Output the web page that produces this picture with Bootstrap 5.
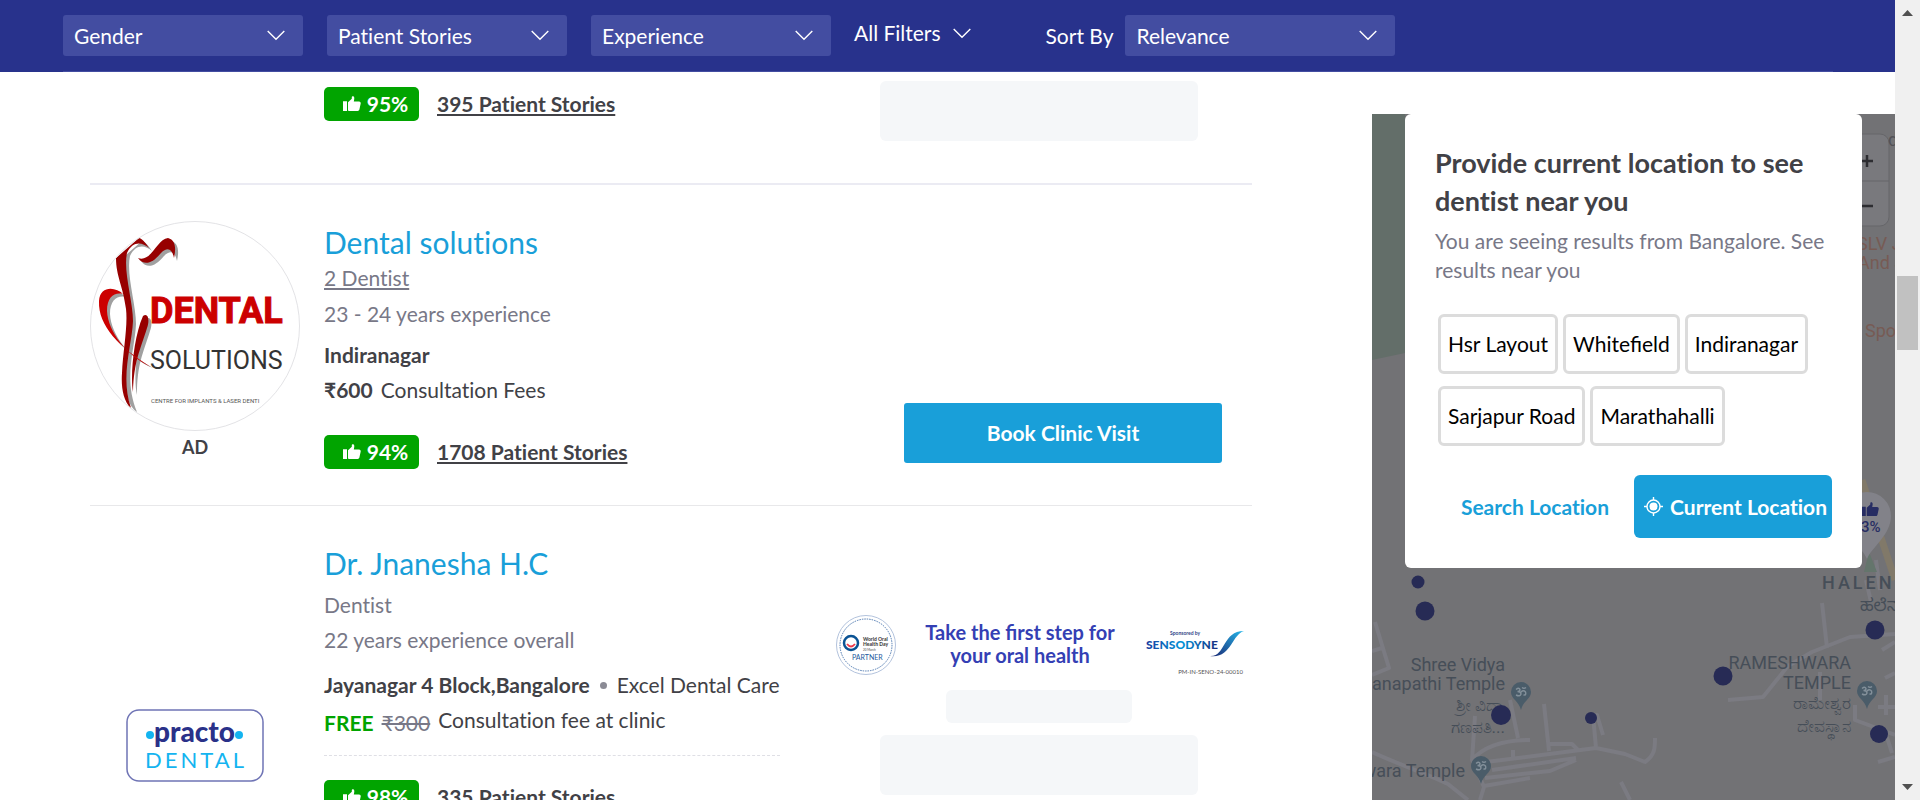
<!DOCTYPE html>
<html lang="en">
<head>
<meta charset="utf-8">
<meta name="viewport" content="width=device-width, initial-scale=1">
<title>Dentists in Bangalore</title>
<link href="https://cdn.jsdelivr.net/npm/bootstrap@5.3.0/dist/css/bootstrap.min.css" rel="stylesheet">
<style>
body{font-family:Lato,"Liberation Sans",sans-serif;font-size:21px;line-height:30px;color:#414146;height:100vh;overflow:hidden;font-variant-ligatures:no-common-ligatures}
button,select{font-variant-ligatures:inherit}
.page-shell,.page-main,.page-body{min-height:0;overflow:hidden}
.with-ligatures{font-variant-ligatures:normal}
.filter-bar{background:#28328c;height:72px;padding-left:63px;padding-right:62px}
.filter-inner{border-bottom:1px solid #434da1;padding-top:15px;height:72px}
.filter-select{appearance:none;width:240px;height:41px;border:0;border-radius:3px;color:#fff;padding:0 11px;line-height:41px;background:#434da1 url("data:image/svg+xml,%3Csvg xmlns='http://www.w3.org/2000/svg' width='18' height='11'%3E%3Cpath d='M.7 1 9 9.3 17.300 1' fill='none' stroke='%23fff' stroke-width='1.4'/%3E%3C/svg%3E") no-repeat right 18px center}
.sort-select{width:270px}
.filter-plain{color:#fff;background:none;border:0;padding:0;height:36px;gap:12px;margin:0 75px 0 23px}
.sort-label{color:#fff;height:41px;line-height:41px;margin-right:12px}
.results{padding:0 120px 0 90px}
.result{border-bottom:1px solid #e8e8ea;padding:36px 0}
.result-first{border-bottom:2px solid #ebebf3;padding:9px 0 42px}
.result-first .info-col{padding-top:6px}
.result-last{border:0}
.photo-col{width:210px;margin-right:24px}
.info-col{min-width:456px;white-space:nowrap}
.action-col{width:426px}
.doc-name{font-size:30px;line-height:42px;font-weight:400}
.doc-name a{color:#199fd9;text-decoration:none}
.muted-text,.muted-text a{color:#787887}
.rating{background:#01a400;color:#fff;border-radius:5px;height:34px;width:95px;font-weight:700;padding-left:8px;gap:6px}
.stories{color:#414146;font-weight:700;margin-left:18px;line-height:33px}
.skeleton{background:#f5f7f9;border-radius:6px;height:60px;width:318px}
.skeleton-short{width:186px;height:33px;margin:14px 0 12px}
.book-btn{background:#199fd9;color:#fff;border:0;border-radius:3px;width:318px;height:60px;font-weight:700;margin:0 30px 6px 0}
.ad-label{font-size:18px;line-height:24px;font-weight:700}
.dash-line{border-top:1px dashed #dfdfe5;margin-top:17px;max-width:456px}
.free-row{margin-top:5px}
.free-row .lowered{padding-top:3px}
.free-text{color:#01a400;font-weight:700}
.dot-mark{width:7px;height:7px;border-radius:50%;background:#8b8b95;margin:0 10px}
.banner-text{color:#343fb4;font-weight:700;font-size:20px;line-height:23px;padding-top:7px}
.map-col{width:523px;padding:42px 0 0}
.map-box{background:#727275;overflow:hidden;padding:0 33px}
.map-art{left:0;top:0}
.loc-card{background:#fff;border-radius:6px;padding:30px}
.loc-title{font-size:27px;line-height:38px;font-weight:700}
.loc-text{line-height:29px;color:#787887;margin-top:6px}
.chips{gap:12px 5px;padding:30px 3px 0}
.chip{background:#fff;border:3px solid #dcdcdc;border-radius:6px;height:60px;padding:0 7px;color:#000}
.loc-actions{padding-top:29px}
.search-loc{background:none;border:0;color:#199fd9;font-weight:700;margin-right:19px}
.current-loc{background:#199fd9;border:0;color:#fff;font-weight:700;height:63px;width:198px;border-radius:6px;white-space:nowrap;padding:0 5px 0 10px}
.scroll-track{width:25px;background:#f0f0f0}
.scroll-thumb{background:#c1c1c1;height:74px;width:21px;margin-top:260px}
</style>
</head>
<body>
<svg class="d-none" xmlns="http://www.w3.org/2000/svg">
  <symbol id="thumb" viewBox="0 0 18 16"><path d="M0 5.200h4V15H0zM5 14.300V6.200L8.800 2.700V1.200C8.800.2 10 0 10.700.5c.9.800.7 2.500.1 4.900h5.200c1.300 0 1.900 1 1.700 2.200l-1.300 6c-.2.900-.8 1.400-1.700 1.400H6.500c-.9 0-1.500-.2-1.500-.7z" fill="currentColor"/></symbol>
  <symbol id="om-pin" viewBox="0 0 20 28"><path d="M10 0a10 10 0 0 1 10 10c0 7-8 9-10 18C8 19 0 17 0 10A10 10 0 0 1 10 0z" fill="#4a5c69"/><path d="M5 7.500q3-2.500 4 0 0 2-2.500 2 3.500 0 3.500 2.500-1 3-5 1M10 10q2.500-2.500 4.500 0 1 3.500-2 3M11 5.500q2 1.500 4 0" fill="none" stroke="#83909a" stroke-width="1.400"/></symbol>
</svg>
<div class="page-shell d-flex h-100">
  <div class="page-main flex-grow-1 d-flex flex-column">
    <header class="filter-bar flex-shrink-0">
      <div class="filter-inner d-flex">
        <select class="filter-select me-4" aria-label="Gender"><option>Gender</option></select>
        <select class="filter-select me-4" aria-label="Patient Stories"><option>Patient Stories</option></select>
        <select class="filter-select" aria-label="Experience"><option>Experience</option></select>
        <button class="filter-plain d-flex align-items-center">All Filters<svg width="18" height="11" viewBox="0 0 18 11"><path d="M.7 1 9 9.300 17.300 1" fill="none" stroke="#fff" stroke-width="1.400"/></svg></button>
        <label class="sort-label" for="sort">Sort By</label>
        <select id="sort" class="filter-select sort-select"><option>Relevance</option></select>
      </div>
    </header>
    <div class="page-body flex-grow-1 d-flex">
      <main class="results flex-grow-1">
        <article class="result result-first d-flex">
          <div class="photo-col flex-shrink-0"></div>
          <div class="info-col flex-grow-1 d-flex align-items-start">
            <div class="rating d-flex align-items-center justify-content-center"><svg width="18" height="16"><use href="#thumb"/></svg>95%</div>
            <a class="stories" href="#">395 Patient Stories</a>
          </div>
          <div class="action-col d-flex justify-content-center"><div class="skeleton"></div></div>
        </article>
        <article class="result d-flex">
          <div class="photo-col flex-shrink-0 text-center">
            <svg class="d-block" width="210" height="210" viewBox="0 0 210 210" role="img" aria-label="Dental Solutions">
              <defs><clipPath id="round"><circle cx="105" cy="105" r="104.500"/></clipPath></defs>
              <g clip-path="url(#round)">
                <g fill="#a0a0a0" transform="translate(3 3)">
                  <path d="M26 37 49 17C53 18 57 24 59 27 51 20 42 21 37 32 33 50 43 80 43 100 42 125 30 155 44 188 35 183 31 165 32 152 33 130 38 105 36 88 33 65 26 55 26 37zM48 37C61 42 67 18 78 17 86 19 86 28 84 37 82 27 77 26 71 32 62 43 54 45 48 37zM33 73C26 66 10 64 9 80 8 105 29 126 60 144 37 135 18 111 17 90 17 75 25 71 33 73zM53 95C58 91 60 99 57 107 50 130 44 140 44 171 40 155 44 115 53 95z"/>
                </g>
                <path fill="#970000" d="M26 37 49 17C53 18 57 24 59 27 51 20 42 21 37 32 33 50 43 80 43 100 42 125 30 155 41 187 33 180 31 165 32 152 33 130 38 105 36 88 33 65 26 55 26 37zM48 37C61 42 67 18 78 17 86 19 86 28 84 37 82 27 77 26 71 32 62 43 54 45 48 37zM53 95C58 91 60 99 57 107 50 130 44 140 43 171 40 155 44 115 53 95z"/>
                <path fill="#c00" d="M33 73C26 66 10 64 9 80 8 105 29 126 61 146 37 135 18 111 17 90 17 75 25 71 33 73z"/>
              </g>
              <g font-family="Roboto,'Liberation Sans',sans-serif">
                <text x="60" y="102" font-weight="700" font-size="36" fill="#c00" stroke="#c00">DENTAL</text>
                <text x="60" y="148" font-size="25" fill="#333">SOLUTIONS</text>
                <text x="61" y="182" font-size="6" fill="#555">CENTRE FOR IMPLANTS &amp; LASER DENTI</text>
              </g>
              <circle cx="105" cy="105" r="104.500" fill="none" stroke="#e3e3e6"/>
            </svg>
            <div class="ad-label mt-1">AD</div>
          </div>
          <div class="info-col flex-grow-1">
            <h2 class="doc-name mb-0"><a href="#">Dental solutions</a></h2>
            <div class="muted-text"><a href="#">2 Dentist</a></div>
            <div class="muted-text" style="margin-top:6px">23 - 24 years experience</div>
            <div class="fw-bold" style="margin-top:11px">Indiranagar</div>
            <div style="margin-top:5px"><b class="me-2">₹600</b>Consultation Fees</div>
            <div class="d-flex" style="margin-top:30px">
              <div class="rating d-flex align-items-center justify-content-center"><svg width="18" height="16"><use href="#thumb"/></svg>94%</div>
              <a class="stories" href="#">1708 Patient Stories</a>
            </div>
          </div>
          <div class="action-col d-flex align-items-end justify-content-end"><button class="book-btn">Book Clinic Visit</button></div>
        </article>
        <article class="result result-last d-flex">
          <div class="photo-col flex-shrink-0">
            <svg class="d-block mx-auto" style="margin-top:167px" width="138" height="73" viewBox="0 0 138 73" role="img" aria-label="Practo Dental">
              <rect x="1" y="1" width="136" height="71" rx="12" fill="#fff" stroke="#6f74b5" stroke-width="1.500"/>
              <circle cx="24" cy="26" r="4" fill="#14b4f0"/><circle cx="113" cy="26" r="4" fill="#14b4f0"/>
              <text x="68.500" y="33" text-anchor="middle" font-family="Lato" font-weight="900" font-size="28" fill="#2a3189">practo</text>
              <text x="70" y="59" text-anchor="middle" font-family="Lato" font-size="22" letter-spacing="3" fill="#14b4f0">DENTAL</text>
            </svg>
          </div>
          <div class="info-col flex-grow-1">
            <h2 class="doc-name mb-0"><a href="#">Dr. Jnanesha H.C</a></h2>
            <div class="muted-text" style="margin-top:6px">Dentist</div>
            <div class="muted-text" style="margin-top:5px">22 years experience overall</div>
            <div class="d-flex align-items-center" style="margin-top:15px"><b>Jayanagar 4 Block,Bangalore</b><span class="dot-mark"></span>Excel Dental Care</div>
            <div class="free-row d-flex"><span class="free-text lowered me-2">FREE</span><s class="muted-text lowered me-2">₹300</s>Consultation fee at clinic</div>
            <div class="dash-line"></div>
            <div class="d-flex mt-4">
              <div class="rating d-flex align-items-center justify-content-center"><svg width="18" height="16"><use href="#thumb"/></svg>98%</div>
              <a class="stories" href="#">335 Patient Stories</a>
            </div>
          </div>
          <div class="action-col d-flex flex-column align-items-center" style="padding-top:72px">
            <div class="d-flex w-100 justify-content-between px-2">
              <svg width="62" height="62" viewBox="0 0 62 62" role="img" aria-label="World Oral Health Day partner">
                <circle cx="32" cy="31" r="29.500" fill="none" stroke="#b3c3dd"/><circle cx="32" cy="31" r="26" fill="none" stroke="#4d78b0" stroke-dasharray="1.500 1"/>
                <circle cx="17" cy="29" r="7" fill="none" stroke="#0b5394" stroke-width="2.500"/><path d="M13 30q4 5 8 0" fill="none" stroke="#ee3a4b" stroke-width="1.800"/>
                <g font-family="Lato" font-weight="900" font-size="5" fill="#444"><text x="29" y="27">World Oral</text><text x="29" y="32">Health Day</text><text x="29" y="37" font-size="3" font-weight="400">20 March</text></g>
                <text x="18" y="46" font-family="Lato" font-size="7" fill="#1c5a9d">PARTNER</text>
              </svg>
              <div class="banner-text with-ligatures text-center">Take the first step for<br>your oral health</div>
              <svg width="100" height="62" viewBox="0 0 100 62" role="img" aria-label="Sponsored by Sensodyne">
                <defs><linearGradient id="sens"><stop stop-color="#183da0"/><stop offset=".5" stop-color="#0094d9"/><stop offset="1" stop-color="#182b7d"/></linearGradient><linearGradient id="wave" x1="0" y1="1" x2="1" y2="0"><stop stop-color="#1b2672"/><stop offset="1" stop-color="#25b7ea"/></linearGradient></defs>
                <text x="26" y="21" font-family="Lato" font-size="5" font-weight="700" fill="#304488">Sponsored by</text>
                <text x="2" y="35" font-family="Lato" font-size="12" font-weight="900" fill="url(#sens)">SENSODYNE</text>
                <path d="M66 42C82 43 78 17 100 17 88 20 87 45 66 42z" fill="url(#wave)"/>
                <text x="99" y="60" text-anchor="end" font-family="Lato" font-size="6" fill="#555">PM-IN-SENO-24-00010</text>
              </svg>
            </div>
            <div class="skeleton skeleton-short"></div>
            <div class="skeleton"></div>
          </div>
        </article>
      </main>
      <aside class="map-col flex-shrink-0 d-flex flex-column">
        <div class="map-box position-relative flex-grow-1">
          <svg class="map-art position-absolute w-100 h-100" viewBox="1372 114 523 686" preserveAspectRatio="xMinYMin slice" aria-label="Map">
            <path d="M1372 114h33v239l-33 7z" fill="#636e69"/>
            <g fill="none" stroke="#7b7b82" stroke-width="4" stroke-linejoin="round">
              <path d="M1372 651 1382 648M1375 622 1389 668 1372 675M1372 752C1400 765 1430 775 1448 784L1468 800M1728 700 1763 697 1788 666 1812 652 1850 637 1895 634M1822 603 1827 648M1820 672v28M1855 705v15l40 15M1886 695v20M1878 707h17M1885 678l10-5M1882 650l13-8M1884 728l8 25M1878 762 1895 757"/>
              <path d="M1480 800 1484 787 1472 760 1475 716M1472 760C1485 745 1505 740 1530 740M1510 700 1518 738M1544 704 1549 751M1486 762 1596 748 1625 754 1645 762C1655 755 1655 748 1655 738M1596 748 1593 715 1597 715 1603 735M1549 744 1572 744 1578 750M1484 786 1530 778M1485 778 1550 771 1576 760M1492 770 1576 758M1513 760v-10M1621 782 1630 800M1880 590 1876 560M1871 602 1866 580"/>
            </g>
            <path d="M1862 480 1895 580" stroke="#817969" stroke-width="7"/><path d="M1864 572l5-20 8 20z" fill="#64756c"/>
            <g fill="#79797d" stroke="#66666a"><rect x="1835" y="134" width="54" height="92" rx="9"/><path d="M1835 181h54"/></g>
            <path d="M1861 161h12M1867 155v12M1861 206h12" stroke="#2d2d31" stroke-width="2.500"/>
            <path d="M1867 559C1863 548 1843 535 1843 516a24 24 0 0 1 48 0c0 19-20 32-24 43z" fill="#828289"/>
            <svg x="1862" y="501" width="17" height="17" color="#272d63"><use href="#thumb"/></svg>
            <g font-family="Roboto,sans-serif" font-size="18">
              <text x="1861" y="532" font-size="15" font-weight="500" fill="#272d63">3%</text>
              <g fill="#775b54"><text x="1857" y="250">SLV J</text><text x="1858" y="269">And S</text><text x="1865" y="337">Spo</text></g>
              <text x="1888" y="146" fill="#525257">d</text>
              <g fill="#464e58">
                <text x="1822" y="589" font-weight="500" letter-spacing="3">HALEN</text>
                <text x="1860" y="611" font-size="17" font-family="'Noto Sans Kannada',sans-serif">ಹಲೆನ</text>
                <g text-anchor="end"><text x="1505" y="671">Shree Vidya</text><text x="1505" y="690">Ganapathi Temple</text><text x="1505" y="711" font-size="17">ಶ್ರೀ ವಿದ್ಯಾ</text><text x="1505" y="733" font-size="17">ಗಣಪತಿ...</text><text x="1465" y="777">wara Temple</text>
                <text x="1851" y="669">RAMESHWARA</text><text x="1851" y="689">TEMPLE</text><text x="1851" y="709" font-size="17">ರಾಮೇಶ್ವರ</text><text x="1851" y="732" font-size="17">ದೇವಸ್ಥಾನ</text></g>
              </g>
            </g>
            <use href="#om-pin" x="1511" y="682" width="20" height="28"/><use href="#om-pin" x="1471" y="756" width="20" height="28"/><use href="#om-pin" x="1857" y="681" width="20" height="28"/>
            <g fill="#272b55"><circle cx="1418" cy="582" r="6.500"/><circle cx="1425" cy="611" r="9.500"/><circle cx="1501" cy="715" r="10"/><circle cx="1591" cy="718" r="6"/><circle cx="1723" cy="676" r="9.500"/><circle cx="1875" cy="630" r="9.500"/><circle cx="1879" cy="734" r="9"/></g>
          </svg>
          <section class="loc-card position-relative">
            <h1 class="loc-title mb-0">Provide current location to see dentist near you</h1>
            <p class="loc-text mb-0">You are seeing results from Bangalore. See results near you</p>
            <div class="chips with-ligatures d-flex flex-wrap">
              <button class="chip">Hsr Layout</button><button class="chip">Whitefield</button><button class="chip">Indiranagar</button><button class="chip">Sarjapur Road</button><button class="chip">Marathahalli</button>
            </div>
            <div class="loc-actions d-flex justify-content-end align-items-center">
              <button class="search-loc">Search Location</button>
              <button class="current-loc d-flex align-items-center justify-content-between"><svg width="19" height="19" viewBox="0 0 19 19"><g fill="none" stroke="#fff" stroke-width="1.400"><circle cx="9.500" cy="9.500" r="6.500"/><path d="M9.500 0v3M9.500 16v3M0 9.500h3M16 9.500h3"/></g><circle cx="9.500" cy="9.500" r="4" fill="#fff"/></svg>Current Location</button>
            </div>
          </section>
        </div>
      </aside>
    </div>
  </div>
  <div class="scroll-track flex-shrink-0 d-flex flex-column align-items-center" aria-hidden="true">
    <svg width="11" height="6" style="margin-top:10px"><path d="M0 6 5.500 0 11 6z" fill="#505050"/></svg>
    <div class="scroll-thumb"></div>
    <svg class="mt-auto" width="11" height="6" style="margin-bottom:10px"><path d="M0 0h11L5.500 6z" fill="#505050"/></svg>
  </div>
</div>
<script src="https://cdn.jsdelivr.net/npm/bootstrap@5.3.0/dist/js/bootstrap.bundle.min.js"></script>
</body>
</html>
